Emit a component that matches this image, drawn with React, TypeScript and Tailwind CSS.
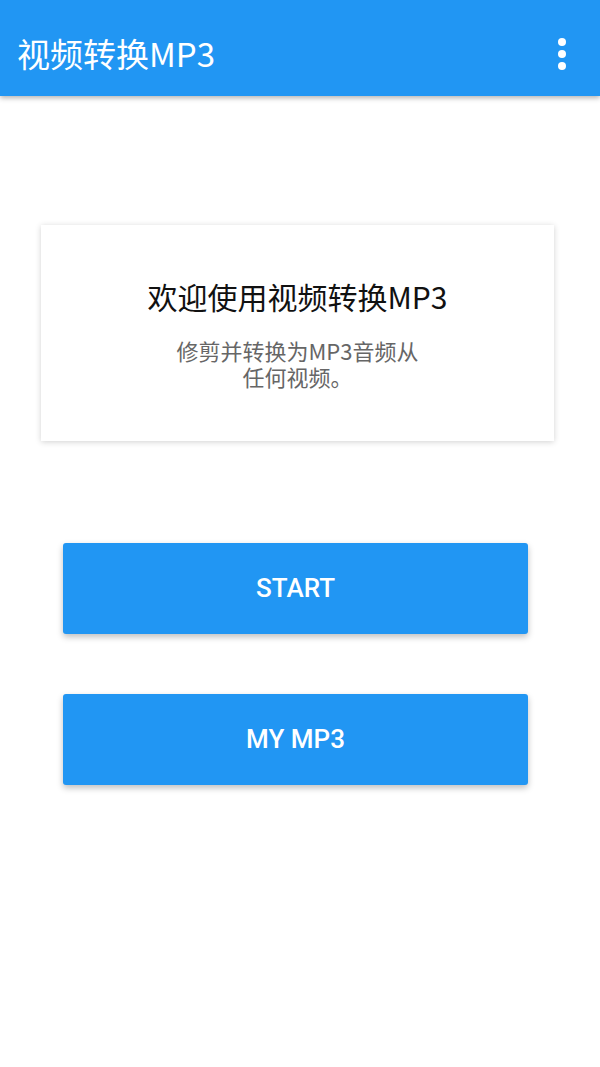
export default function App() {
	return (
		<div
			className="w-[600px] h-[1067px] bg-white overflow-hidden"
			style={{ fontFamily: '"Noto Sans CJK SC", Roboto, sans-serif' }}
		>
			<div className="h-[96px] bg-[#2196f3] flex items-center justify-between pl-[17px] pr-[34px] shadow-[0_2px_5px_rgba(0,0,0,0.3)] relative z-10">
				<h1 className="text-white text-[33px] leading-none mt-[10px] font-normal">视频转换MP3</h1>
				<div className="flex flex-col gap-[4px] mt-[12px]">
					<span className="w-[8px] h-[8px] rounded-full bg-white"></span>
					<span className="w-[8px] h-[8px] rounded-full bg-white"></span>
					<span className="w-[8px] h-[8px] rounded-full bg-white"></span>
				</div>
			</div>

			<div className="pt-[129px]">
				<div className="ml-[41px] w-[513px] h-[216px] bg-white shadow-[0_1px_6px_rgba(0,0,0,0.18)] flex flex-col items-center pt-[50px]">
					<h2 className="text-[30px] leading-[42px] text-[#111]">欢迎使用视频转换MP3</h2>
					<p className="mt-[20px] text-[22px] leading-[26px] text-[#666] text-center">
						修剪并转换为MP3音频从
						<br />
						任何视频。
					</p>
				</div>

				<div className="mt-[102px] ml-[63px] w-[465px] flex flex-col gap-[60px]">
					<button
						className="h-[91px] rounded-[3px] bg-[#2196f3] text-white text-[26px] font-medium shadow-[0_3px_6px_rgba(0,0,0,0.25)]"
						style={{ fontFamily: 'Roboto, sans-serif' }}
					>
						START
					</button>
					<button
						className="h-[91px] rounded-[3px] bg-[#2196f3] text-white text-[26px] font-medium shadow-[0_3px_6px_rgba(0,0,0,0.25)]"
						style={{ fontFamily: 'Roboto, sans-serif' }}
					>
						MY MP3
					</button>
				</div>
			</div>
		</div>
	);
}
